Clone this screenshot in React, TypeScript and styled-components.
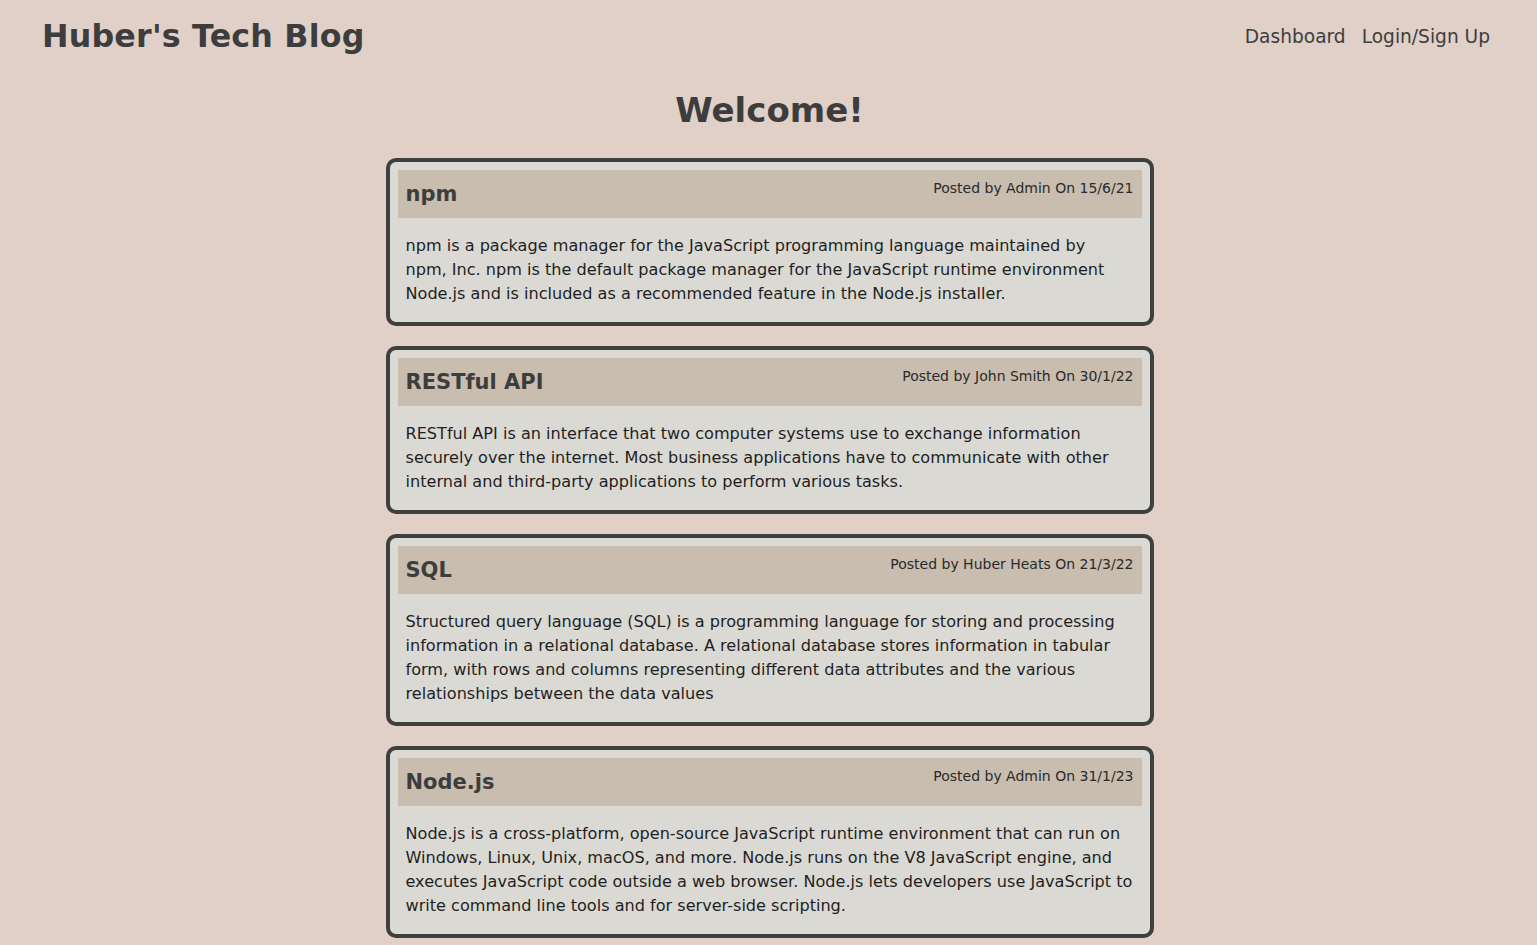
import React from "react";
import styled, { createGlobalStyle } from "styled-components";

const GlobalStyle = createGlobalStyle`
  html, body { margin: 0; padding: 0; }
  body {
    background: #e0d0c8;
    font-family: "DejaVu Sans", "Noto Sans", sans-serif;
    color: #3d3d3d;
  }
`;

const Page = styled.div`
  min-height: 945px;
  display: flex;
  flex-direction: column;
`;

const TopBar = styled.header`
  display: flex;
  align-items: center;
  justify-content: space-between;
  height: 72px;
  padding: 0 47px 0 42px;
`;

const SiteTitle = styled.h1`
  margin: 0;
  font-size: 31.7px;
  font-weight: 600;
  color: #3d3d3d;
  letter-spacing: 0.2px;
`;

const Nav = styled.nav`
  display: flex;
  gap: 16px;
`;

const NavLink = styled.a`
  font-size: 18.6px;
  color: #3d3d3d;
  text-decoration: none;
`;

const Main = styled.main`
  display: flex;
  flex-direction: column;
  align-items: center;
  padding-left: 2px;
`;

const Welcome = styled.h2`
  margin: 18px 0 28px;
  font-size: 34px;
  font-weight: 700;
  color: #3d3d3d;
`;

const PostList = styled.div`
  display: flex;
  flex-direction: column;
  gap: 20px;
  width: 768px;
`;

const Card = styled.article`
  background: #dad9d4;
  border: 4px solid #3f3f3f;
  border-radius: 10px;
  padding: 8px 8px 0;
`;

const CardHeader = styled.div`
  background: #c8bdae;
  height: 48px;
  display: flex;
  justify-content: space-between;
  padding: 0 8px;
`;

const PostTitle = styled.h3`
  margin: 0;
  align-self: center;
  font-size: 21px;
  font-weight: 700;
  color: #3d3d3d;
`;

const Meta = styled.span`
  margin-top: 10px;
  font-size: 14px;
  color: #2a2a2a;
`;

const Body = styled.p`
  margin: 0;
  padding: 16px 8px;
  font-size: 16.1px;
  line-height: 24px;
  color: #1f1f1f;
`;

const posts = [
  {
    title: "npm",
    meta: "Posted by Admin On 15/6/21",
    body: "npm is a package manager for the JavaScript programming language maintained by npm,\u00a0Inc. npm is the default package manager for the JavaScript runtime environment Node.js and is included as a recommended feature in the Node.js installer.",
  },
  {
    title: "RESTful API",
    meta: "Posted by John Smith On 30/1/22",
    body: "RESTful API is an interface that two computer systems use to exchange information securely over the internet. Most business applications have to communicate with other internal and third-party applications to perform various tasks.",
  },
  {
    title: "SQL",
    meta: "Posted by Huber Heats On 21/3/22",
    body: "Structured query language (SQL) is a programming language for storing and processing information in a relational database. A relational database stores information in tabular form, with rows and columns representing different data attributes and the various relationships between the data values",
  },
  {
    title: "Node.js",
    meta: "Posted by Admin On 31/1/23",
    body: "Node.js is a cross-platform, open-source JavaScript runtime environment that can run on Windows, Linux, Unix, macOS, and more. Node.js runs on the V8 JavaScript engine, and executes JavaScript code outside a web browser. Node.js lets developers use JavaScript to write command line tools and for server-side scripting.",
  },
];

export default function App() {
  return (
    <Page>
      <GlobalStyle />
      <TopBar>
        <SiteTitle>Huber's Tech Blog</SiteTitle>
        <Nav>
          <NavLink href="#">Dashboard</NavLink>
          <NavLink href="#">Login/Sign Up</NavLink>
        </Nav>
      </TopBar>
      <Main>
        <Welcome>Welcome!</Welcome>
        <PostList>
          {posts.map((p) => (
            <Card key={p.title}>
              <CardHeader>
                <PostTitle>{p.title}</PostTitle>
                <Meta>{p.meta}</Meta>
              </CardHeader>
              <Body>{p.body}</Body>
            </Card>
          ))}
        </PostList>
      </Main>
    </Page>
  );
}
